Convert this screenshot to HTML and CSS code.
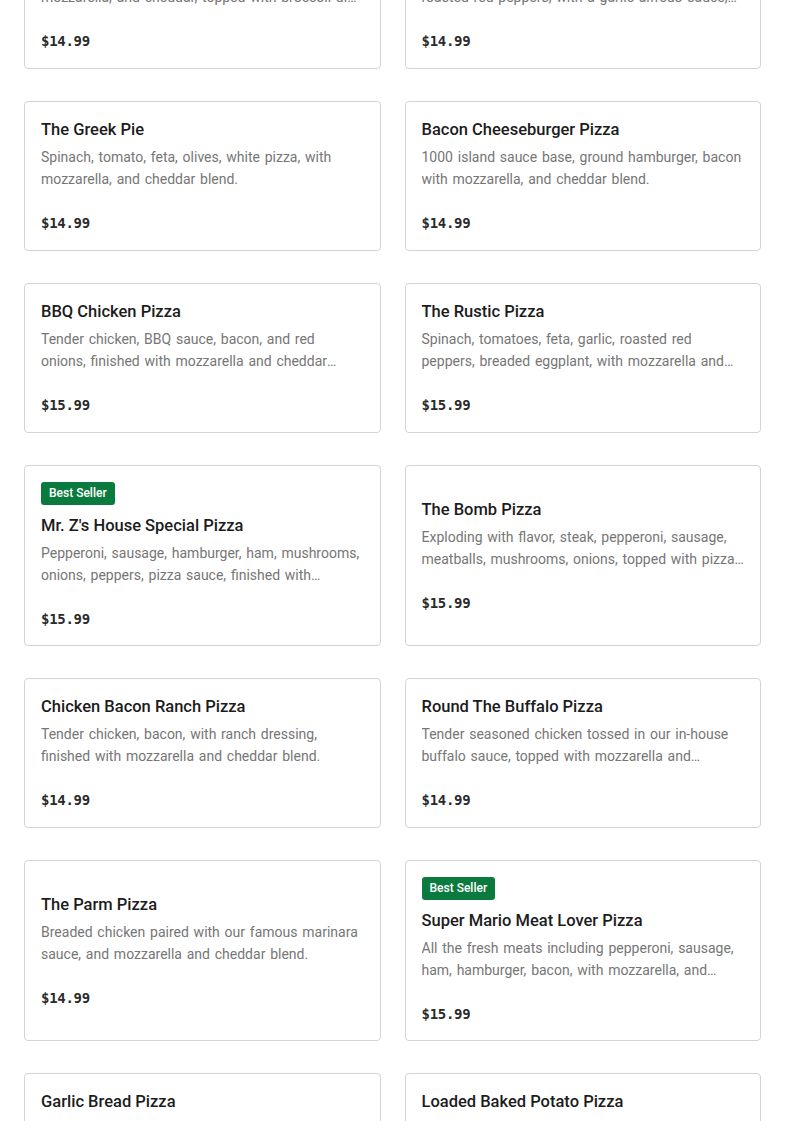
FILE: index.html
```html
<!DOCTYPE html>
<html lang="en">
<head>
<meta charset="utf-8">
<title>Menu</title>
<link rel="stylesheet" href="styles.css">
</head>
<body>
<main class="menu">
  <div class="grid">
    <article class="card">
      <h3 class="title">Broccoli Chicken Alfredo Pizza</h3>
      <p class="desc">Grilled chicken, fresh garlic, alfredo sauce, with mozzarella, and cheddar, topped with broccoli di rabe and parmesan.</p>
      <p class="price">$14.99</p>
    </article>
    <article class="card">
      <h3 class="title">Chicken Alfredo Pizza</h3>
      <p class="desc">Grilled chicken, broccoli, spinach, mushrooms, roasted red peppers, with a garlic alfredo sauce, mozzarella and cheddar.</p>
      <p class="price">$14.99</p>
    </article>

    <article class="card">
      <h3 class="title">The Greek Pie</h3>
      <p class="desc">Spinach, tomato, feta, olives, white pizza, with mozzarella, and cheddar blend.</p>
      <p class="price">$14.99</p>
    </article>
    <article class="card">
      <h3 class="title">Bacon Cheeseburger Pizza</h3>
      <p class="desc">1000 island sauce base, ground hamburger, bacon with mozzarella, and cheddar blend.</p>
      <p class="price">$14.99</p>
    </article>

    <article class="card">
      <h3 class="title">BBQ Chicken Pizza</h3>
      <p class="desc">Tender chicken, BBQ sauce, bacon, and red onions, finished with mozzarella and cheddar blend.</p>
      <p class="price">$15.99</p>
    </article>
    <article class="card">
      <h3 class="title">The Rustic Pizza</h3>
      <p class="desc">Spinach, tomatoes, feta, garlic, roasted red peppers, breaded eggplant, with mozzarella and cheddar blend.</p>
      <p class="price">$15.99</p>
    </article>

    <article class="card">
      <span class="badge">Best Seller</span>
      <h3 class="title">Mr. Z's House Special Pizza</h3>
      <p class="desc">Pepperoni, sausage, hamburger, ham, mushrooms, onions, peppers, pizza sauce, finished with mozzarella and cheddar blend.</p>
      <p class="price">$15.99</p>
    </article>
    <article class="card">
      <h3 class="title">The Bomb Pizza</h3>
      <p class="desc">Exploding with flavor, steak, pepperoni, sausage, meatballs, mushrooms, onions, topped with pizza sauce, mozzarella and cheddar blend.</p>
      <p class="price">$15.99</p>
    </article>

    <article class="card">
      <h3 class="title">Chicken Bacon Ranch Pizza</h3>
      <p class="desc">Tender chicken, bacon, with ranch dressing, finished with mozzarella and cheddar blend.</p>
      <p class="price">$14.99</p>
    </article>
    <article class="card">
      <h3 class="title">Round The Buffalo Pizza</h3>
      <p class="desc">Tender seasoned chicken tossed in our in-house buffalo sauce, topped with mozzarella and cheddar blend.</p>
      <p class="price">$14.99</p>
    </article>

    <article class="card">
      <h3 class="title">The Parm Pizza</h3>
      <p class="desc">Breaded chicken paired with our famous marinara sauce, and mozzarella and cheddar blend.</p>
      <p class="price">$14.99</p>
    </article>
    <article class="card">
      <span class="badge">Best Seller</span>
      <h3 class="title">Super Mario Meat Lover Pizza</h3>
      <p class="desc">All the fresh meats including pepperoni, sausage, ham, hamburger, bacon, with mozzarella, and cheddar blend.</p>
      <p class="price">$15.99</p>
    </article>

    <article class="card">
      <h3 class="title">Garlic Bread Pizza</h3>
      <p class="desc">Fresh garlic, olive oil, and parsley, baked with mozzarella and cheddar blend.</p>
      <p class="price">$13.99</p>
    </article>
    <article class="card">
      <h3 class="title">Loaded Baked Potato Pizza</h3>
      <p class="desc">Sliced potatoes, bacon, sour cream base, topped with scallions, mozzarella and cheddar blend.</p>
      <p class="price">$15.99</p>
    </article>
  </div>
</main>
</body>
</html>
```
FILE: styles.css
```css
* { box-sizing: border-box; }
html, body { margin: 0; padding: 0; background: #fff; }
body {
  font-family: "Roboto", "Liberation Sans", sans-serif;
  color: #191919;
  overflow: hidden;
}
.menu {
  padding: 0 24px;
  margin-top: -81px;
}
.grid {
  display: grid;
  grid-template-columns: 1fr 1fr;
  column-gap: 24px;
  row-gap: 32px;
}
.card {
  border: 1px solid #d4d4d4;
  border-radius: 4px;
  padding: 16px;
  display: flex;
  flex-direction: column;
  justify-content: center;
  align-items: flex-start;
  min-height: 150px;
}
.badge {
  display: inline-block;
  background: #0b7a3e;
  color: #fff;
  font-size: 12px;
  font-weight: 500;
  line-height: 23px;
  height: 23px;
  padding: 0 8px;
  border-radius: 3px;
  margin-bottom: 10px;
}
.title {
  margin: 0;
  padding-top: 1px;
  font-size: 16.5px;
  font-weight: 500;
  line-height: 20px;
  color: #1c1c1c;
}
.desc {
  margin: 6px 0 0;
  font-size: 14px;
  word-spacing: 1.3px;
  line-height: 22px;
  color: #767676;
  display: -webkit-box;
  -webkit-line-clamp: 2;
  -webkit-box-orient: vertical;
  overflow: hidden;
  width: 100%;
}
.price {
  margin: 23px 0 0;
  font-family: "DejaVu Sans Mono", "Liberation Mono", monospace;
  font-size: 14px;
  font-weight: 700;
  line-height: 20px;
  color: #2a2a2a;
  letter-spacing: -0.3px;
}
```
